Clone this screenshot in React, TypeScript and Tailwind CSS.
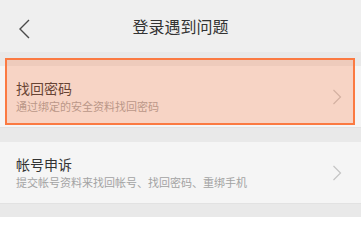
const font = { fontFamily: '"Noto Sans CJK SC", "Noto Sans", sans-serif' };

function Chevron({ dir }: { dir: "left" | "right" }) {
  if (dir === "left") {
    return (
      <svg width="14" height="20" viewBox="0 0 14 20" fill="none">
        <path d="M11 1 L2 10 L11 19" stroke="#4a4a4a" strokeWidth="1.4" />
      </svg>
    );
  }
  return (
    <svg width="10" height="16" viewBox="0 0 10 16" fill="none">
      <path d="M1.5 1 L8.5 8 L1.5 15" stroke="#c4c4c4" strokeWidth="1.2" />
    </svg>
  );
}

type ItemProps = {
  title: string;
  desc: string;
};

function Item({ title, desc }: ItemProps) {
  return (
    <div className="flex h-[62px] items-center justify-between border-b border-[#e2e2e2] bg-[#f5f5f5] pl-4 pr-[19px]">
      <div className="flex flex-col gap-[2px]">
        <span className="text-[14px] leading-[17px] text-[#333]">{title}</span>
        <span className="text-[11px] leading-[14px] text-[#a3a3a3]">{desc}</span>
      </div>
      <Chevron dir="right" />
    </div>
  );
}

export default function App() {
  return (
    <div className="relative h-[217px] w-[361px] overflow-hidden bg-[#e9e9e9]" style={font}>
      <div className="relative flex h-[52px] items-center justify-center bg-[#efefef]">
        <button className="absolute left-[18px] top-[19px]">
          <Chevron dir="left" />
        </button>
        <span className="text-[16px] text-[#333]">登录遇到问题</span>
      </div>

      <div className="mt-[14px]">
        <Item title="找回密码" desc="通过绑定的安全资料找回密码" />
      </div>
      <div className="mt-[14px]">
        <Item title="帐号申诉" desc="提交帐号资料来找回帐号、找回密码、重绑手机" />
      </div>

      {/* highlight box */}
      <div className="absolute left-[5px] top-[58px] h-[67px] w-[350px] border-2 border-[#fb7a42] bg-[rgba(255,120,60,0.26)]" />
    </div>
  );
}
